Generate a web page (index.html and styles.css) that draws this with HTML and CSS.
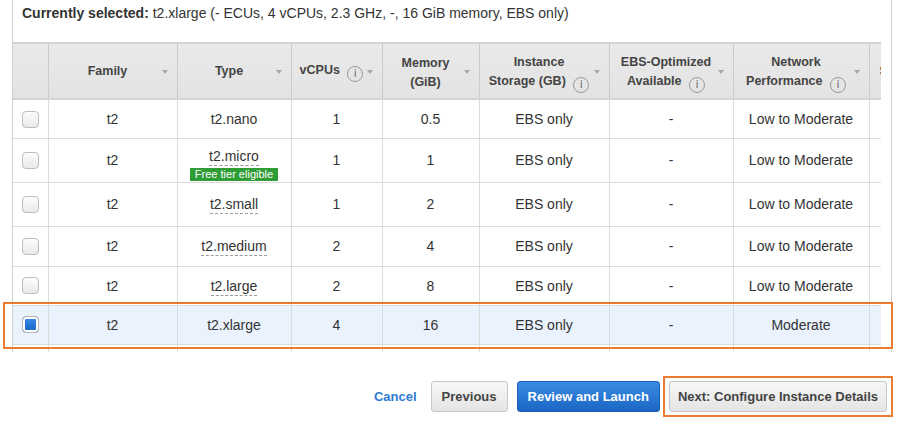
FILE: index.html
```html
<!DOCTYPE html>
<html lang="en">
<head>
<meta charset="UTF-8" />
<meta name="viewport" content="width=device-width,initial-scale=1.0" />
<title>Choose an Instance Type</title>
<link rel="stylesheet" href="styles.css">
</head>
<body>
  <div class="panel">
    <div class="current"><b>Currently selected:</b> t2.xlarge (- ECUs, 4 vCPUs, 2.3 GHz, -, 16 GiB memory, EBS only)</div>
    <div class="scroll">
      <table class="grid">
        <colgroup>
          <col style="width:35px"><col style="width:129px"><col style="width:114px"><col style="width:91px"><col style="width:97px"><col style="width:130px"><col style="width:124px"><col style="width:136px"><col style="width:110px">
        </colgroup>
        <thead>
          <tr>
            <th class="sel"></th>
            <th>Family<i class="sort"></i></th>
            <th>Type<i class="sort"></i></th>
            <th>vCPUs <span class="info">i</span><i class="sort"></i></th>
            <th class="two">Memory<br>(GiB)<i class="sort"></i></th>
            <th class="two">Instance<br>Storage (GB) <span class="info">i</span><i class="sort"></i></th>
            <th class="two">EBS-Optimized<br>Available <span class="info">i</span><i class="sort"></i></th>
            <th class="two">Network<br>Performance <span class="info">i</span><i class="sort"></i></th>
            <th class="more">S</th>
          </tr>
        </thead>
        <tbody>
          <tr class="r39">
            <td class="sel"><span class="check"></span></td>
            <td>t2</td><td>t2.nano</td><td>1</td><td>0.5</td><td>EBS only</td><td>-</td><td>Low to Moderate</td><td></td>
          </tr>
          <tr class="r44">
            <td class="sel"><span class="check"></span></td>
            <td>t2</td><td class="badged"><span class="tip">t2.micro</span><br><span class="free">Free tier eligible</span></td><td>1</td><td>1</td><td>EBS only</td><td>-</td><td>Low to Moderate</td><td></td>
          </tr>
          <tr class="r44">
            <td class="sel"><span class="check"></span></td>
            <td>t2</td><td><span class="tip">t2.small</span></td><td>1</td><td>2</td><td>EBS only</td><td>-</td><td>Low to Moderate</td><td></td>
          </tr>
          <tr class="r40">
            <td class="sel"><span class="check"></span></td>
            <td>t2</td><td><span class="tip">t2.medium</span></td><td>2</td><td>4</td><td>EBS only</td><td>-</td><td>Low to Moderate</td><td></td>
          </tr>
          <tr class="r39">
            <td class="sel"><span class="check"></span></td>
            <td>t2</td><td><span class="tip">t2.large</span></td><td>2</td><td>8</td><td>EBS only</td><td>-</td><td>Low to Moderate</td><td></td>
          </tr>
          <tr class="r39 selected">
            <td class="sel"><span class="check on"></span></td>
            <td>t2</td><td>t2.xlarge</td><td>4</td><td>16</td><td>EBS only</td><td>-</td><td>Moderate</td><td></td>
          </tr>
          <tr class="r39">
            <td class="sel"></td>
            <td></td><td></td><td></td><td></td><td></td><td></td><td></td><td></td>
          </tr>
        </tbody>
      </table>
    </div>
  </div>
  <div class="mark-row"></div>

  <div class="actions">
    <a class="cancel" href="#">Cancel</a>
    <button class="btn">Previous</button>
    <button class="btn primary">Review and Launch</button>
    <span class="mark"><button class="btn">Next: Configure Instance Details</button></span>
  </div>
</body>
</html>
```

FILE: styles.css
```css
body { margin:0; font-family:"Liberation Sans", Arial, sans-serif; color:#333; background:#fff; position:relative; }
.panel { margin-left:12px; width:880px; height:352px; box-sizing:border-box; border-left:1px solid #cfcfcf; border-right:1px solid #cfcfcf; overflow:hidden; }
.current { height:42px; box-sizing:border-box; padding:5px 9px 0; font-size:14px; line-height:17px; color:#333; }
.scroll { width:868px; overflow:hidden; }
.grid { border-collapse:collapse; table-layout:fixed; width:966px; font-size:14px; }
.grid th { height:50px; padding:0 16px 0 6px; position:relative; background:linear-gradient(#e9e9e9,#e3e3e3); border-top:2px solid #d5d5d5; border-bottom:2px solid #d5d5d5; border-left:1px solid #cbcbcb; font-size:12.5px; line-height:19px; color:#444; font-weight:700; text-align:center; white-space:nowrap; }
.grid th.two { padding-top:4px; }
.grid th.sel, .grid td.sel { border-left:none; padding:0; }
.grid th.more { text-align:left; padding-left:10px; }
.grid td { border-left:1px solid #dcdcdc; border-bottom:1px solid #dcdcdc; text-align:center; padding:0 4px; white-space:nowrap; color:#333; }
.grid td.badged { padding-top:8px; }
.r39 { height:39px; }
.r40 { height:40px; }
.r44 { height:44px; }
.selected td { background:#eaf2fd; }
.sort { position:absolute; right:9px; top:50%; margin-top:-1px; width:0; height:0; border-left:3.5px solid transparent; border-right:3.5px solid transparent; border-top:4px solid #a8a8a8; }
.info { display:inline-block; width:14px; height:14px; border:1px solid #9a9a9a; border-radius:50%; font-size:11px; line-height:14px; font-weight:400; color:#6f6f6f; text-align:center; vertical-align:-3px; margin-left:4px; font-family:"DejaVu Sans", sans-serif; }
.check { display:inline-block; width:15px; height:15px; border:1px solid #bdbdbd; border-radius:4px; background:linear-gradient(#fdfdfd,#e9e9e9); vertical-align:middle; }
.check.on { background:linear-gradient(#3b8de8,#1763c6); box-shadow:inset 0 0 0 2px #fff; border-color:#b5b5b5; }
.tip { border-bottom:1px dashed #9a9a9a; padding-bottom:1px; }
.free { display:inline-block; margin-top:4px; padding:0 5px; background:#2f9d36; color:#fff; font-size:11px; line-height:13px; }
.mark-row { position:absolute; left:3px; top:302px; width:890px; height:47px; box-sizing:border-box; border:2px solid #ec7b31; }
.actions { display:flex; justify-content:flex-end; align-items:center; margin-top:24px; padding-right:12px; }
.cancel { font-size:13px; font-weight:700; color:#2e7bd4; text-decoration:none; margin-right:5px; }
.btn { height:31px; padding:0 10px; font-family:inherit; font-size:13px; font-weight:700; color:#444; border:1px solid #c6c6c6; border-radius:3px; background:linear-gradient(#f7f7f7,#e4e4e4); cursor:pointer; margin-left:9px; }
.btn.primary { color:#fff; border-color:#1c5fb3; background:linear-gradient(#3a8be4,#1a66c4); padding:0 10px; }
.mark { display:inline-flex; border:2px solid #ec7b31; padding:3px 4px; margin-left:3px; }
.mark .btn { margin-left:0; padding:0 8px; }
```
